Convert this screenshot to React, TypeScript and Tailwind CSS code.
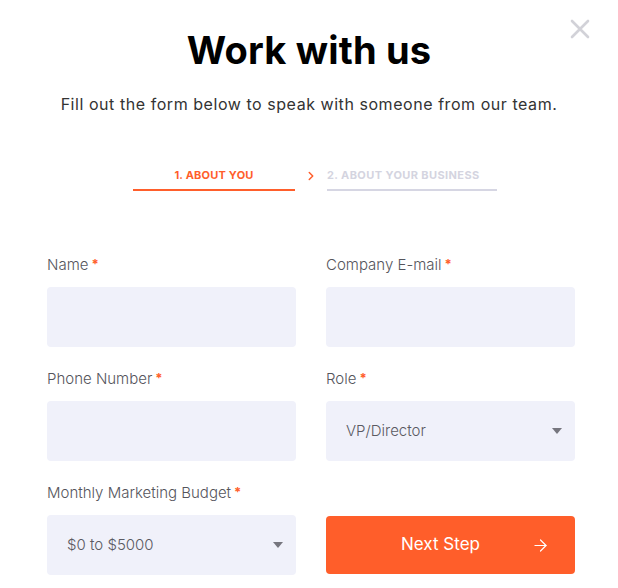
import { ArrowRight, ChevronRight } from "lucide-react";

const font = { fontFamily: "Inter, 'Open Sans', sans-serif" };

function Label({ text }: { text: string }) {
    return (
        <div className="h-[22px] flex items-center text-[15px] font-light text-[#55555c] mb-[11px]">
            {text}
            <span className="text-[#ff5e2b] ml-[3px] text-[13px] font-bold">*</span>
        </div>
    );
}

function Select({ value }: { value: string }) {
    return (
        <div className="h-[60px] rounded bg-[#f0f1fa] flex items-center justify-between pl-[20px] pr-[12px] text-[15px] font-light text-[#5a5a62]">
            <span>{value}</span>
            <svg width="12" height="6" viewBox="0 0 12 6">
                <path d="M1 0h10L6 6z" fill="#76767e" />
            </svg>
        </div>
    );
}

export default function App() {
    return (
        <div className="w-[618px] h-[588px] bg-white relative overflow-hidden" style={font}>
            <button className="absolute left-[570px] top-[19px]">
                <svg width="20" height="20" viewBox="0 0 20 20">
                    <path d="M2 2L18 18M18 2L2 18" stroke="#d2d2d8" strokeWidth="2.6" strokeLinecap="round" />
                </svg>
            </button>

            <div className="pt-[26px] flex flex-col items-center">
                <h1 className="text-[38px] leading-[48px] font-bold text-black tracking-[0.2px]">Work with us</h1>
                <p className="mt-[20px] text-[16px] leading-[20px] text-[#333] tracking-[0.55px]">
                    Fill out the form below to speak with someone from our team.
                </p>

                <div className="mt-[51px] ml-[12px] flex items-start">
                    <div className="w-[162px] flex flex-col items-center">
                        <span className="text-[11px] font-bold text-[#ff5e2b] leading-[20px] tracking-[0.2px]">1. ABOUT YOU</span>
                        <div className="mt-[4px] h-[2px] w-full bg-[#ff5e2b]" />
                    </div>
                    <ChevronRight className="w-[14px] h-[14px] text-[#ff5e2b] mx-[9px] mt-[4px]" strokeWidth={2.5} />
                    <div className="w-[170px] flex flex-col">
                        <span className="text-[11px] font-bold text-[#d4d4e0] leading-[20px] tracking-[0.4px]">2. ABOUT YOUR BUSINESS</span>
                        <div className="mt-[4px] h-[2px] w-full bg-[#d6d6e3]" />
                    </div>
                </div>
            </div>

            <div className="mt-[63px] pl-[47px] pr-[43px] grid grid-cols-2 gap-x-[30px] gap-y-[21px]">
                <div>
                    <Label text="Name" />
                    <div className="h-[60px] rounded bg-[#f0f1fa]" />
                </div>
                <div>
                    <Label text="Company E-mail" />
                    <div className="h-[60px] rounded bg-[#f0f1fa]" />
                </div>
                <div>
                    <Label text="Phone Number" />
                    <div className="h-[60px] rounded bg-[#f0f1fa]" />
                </div>
                <div>
                    <Label text="Role" />
                    <Select value="VP/Director" />
                </div>
                <div>
                    <Label text="Monthly Marketing Budget" />
                    <Select value="$0 to $5000" />
                </div>
                <div className="flex flex-col justify-end">
                    <button className="h-[58px] mb-[1px] rounded bg-[#ff5e2a] text-white text-[17px] flex items-center justify-center pr-[20px] relative">
                        Next Step
                        <ArrowRight className="absolute right-[25px] w-[19px] h-[19px]" strokeWidth={1.5} />
                    </button>
                </div>
            </div>
        </div>
    );
}
